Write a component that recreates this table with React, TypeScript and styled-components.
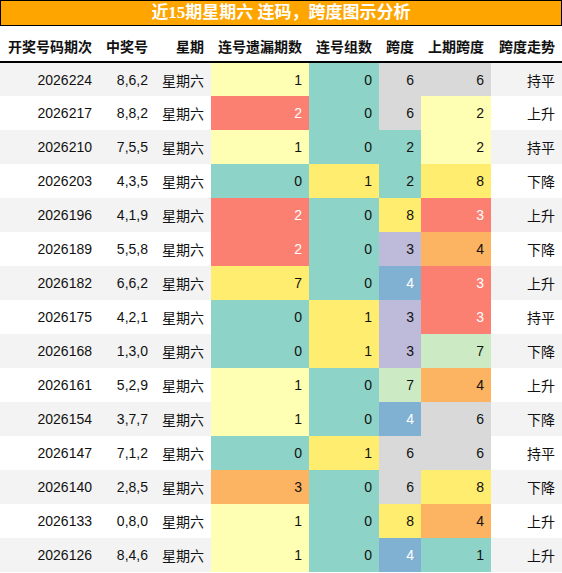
import React from 'react'
import styled, { createGlobalStyle } from 'styled-components'

const GlobalStyle = createGlobalStyle`
  html, body {
    margin: 0;
    padding: 0;
    background: #fff;
  }
  body {
    font-family: 'Liberation Sans', 'Noto Sans CJK SC', sans-serif;
    color: #111;
  }
`

const Wrapper = styled.div`
  width: 562px;
`

const Title = styled.div`
  background: #ffa500;
  border: 1px solid #000;
  color: #fff;
  font-family: 'Liberation Serif', 'Noto Sans CJK SC', serif;
  font-size: 17px;
  font-weight: 700;
  height: 24px;
  line-height: 24px;
  text-align: center;
`

const Table = styled.table`
  border-collapse: collapse;
  table-layout: fixed;
  width: 562px;
`

const Head = styled.th`
  background: #fff;
  border-bottom: 2px solid #000;
  font-size: 14px;
  font-weight: 700;
  height: 36px;
  padding: 5px 7px 0;
  box-sizing: border-box;
  text-align: right;
  white-space: nowrap;
`

const Row = styled.tr<{ $odd: boolean }>`
  background: ${({ $odd }) => ($odd ? '#f3f3f3' : '#fff')};
`

const Cell = styled.td<{ $bg?: string; $light?: boolean }>`
  background: ${({ $bg }) => $bg ?? 'transparent'};
  color: ${({ $light }) => ($light ? '#fff' : '#111')};
  font-size: 14px;
  height: 34px;
  padding: 0 7px;
  box-sizing: border-box;
  text-align: right;
  white-space: nowrap;
`

const C = {
  teal: '#8dd3c7',
  pale: '#ffffb3',
  lav: '#bebada',
  salmon: '#fb8072',
  blue: '#80b1d3',
  orange: '#fdb462',
  gray: '#d9d9d9',
  green: '#ccebc5',
  yellow: '#ffed6f',
}

// per-column value → colour
const GAP_COLORS: Record<number, string> = { 0: C.teal, 1: C.pale, 2: C.salmon, 3: C.orange, 7: C.yellow }
const GROUP_COLORS: Record<number, string> = { 0: C.teal, 1: C.yellow }
const SPAN_COLORS: Record<number, string> = { 2: C.teal, 3: C.lav, 4: C.blue, 6: C.gray, 7: C.green, 8: C.yellow }
const PREV_COLORS: Record<number, string> = { 1: C.teal, 2: C.pale, 3: C.salmon, 4: C.orange, 6: C.gray, 7: C.green, 8: C.yellow }

const DARK = [C.salmon, C.blue]

const HEADERS = ['开奖号码期次', '中奖号', '星期', '连号遗漏期数', '连号组数', '跨度', '上期跨度', '跨度走势']
const WIDTHS = [99, 56, 56, 98, 70, 42, 70, 71]

const ROWS: [string, string, number, number, number, number, string][] = [
  ['2026224', '8,6,2', 1, 0, 6, 6, '持平'],
  ['2026217', '8,8,2', 2, 0, 6, 2, '上升'],
  ['2026210', '7,5,5', 1, 0, 2, 2, '持平'],
  ['2026203', '4,3,5', 0, 1, 2, 8, '下降'],
  ['2026196', '4,1,9', 2, 0, 8, 3, '上升'],
  ['2026189', '5,5,8', 2, 0, 3, 4, '下降'],
  ['2026182', '6,6,2', 7, 0, 4, 3, '上升'],
  ['2026175', '4,2,1', 0, 1, 3, 3, '持平'],
  ['2026168', '1,3,0', 0, 1, 3, 7, '下降'],
  ['2026161', '5,2,9', 1, 0, 7, 4, '上升'],
  ['2026154', '3,7,7', 1, 0, 4, 6, '下降'],
  ['2026147', '7,1,2', 0, 1, 6, 6, '持平'],
  ['2026140', '2,8,5', 3, 0, 6, 8, '下降'],
  ['2026133', '0,8,0', 1, 0, 8, 4, '上升'],
  ['2026126', '8,4,6', 1, 0, 4, 1, '上升'],
]

const ColorCell = ({ value, colors }: { value: number; colors: Record<number, string> }) => {
  const bg = colors[value]
  return (
    <Cell $bg={bg} $light={DARK.includes(bg)}>
      {value}
    </Cell>
  )
}

export default function App() {
  return (
    <Wrapper>
      <GlobalStyle />
      <Title>近15期星期六 连码，跨度图示分析</Title>
      <Table>
        <colgroup>
          {WIDTHS.map((w, i) => (
            <col key={i} style={{ width: w }} />
          ))}
        </colgroup>
        <thead>
          <tr>
            {HEADERS.map((h) => (
              <Head key={h}>{h}</Head>
            ))}
          </tr>
        </thead>
        <tbody>
          {ROWS.map(([issue, nums, gap, group, span, prev, trend], i) => (
            <Row key={issue} $odd={i % 2 === 0}>
              <Cell>{issue}</Cell>
              <Cell>{nums}</Cell>
              <Cell>星期六</Cell>
              <ColorCell value={gap} colors={GAP_COLORS} />
              <ColorCell value={group} colors={GROUP_COLORS} />
              <ColorCell value={span} colors={SPAN_COLORS} />
              <ColorCell value={prev} colors={PREV_COLORS} />
              <Cell>{trend}</Cell>
            </Row>
          ))}
        </tbody>
      </Table>
    </Wrapper>
  )
}
